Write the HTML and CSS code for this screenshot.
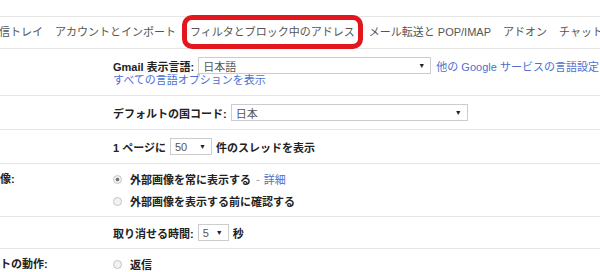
FILE: index.html
```html
<!DOCTYPE html>
<html lang="ja">
<head>
    <meta charset="UTF-8">
    <title>設定 - Gmail</title>
    <meta name="viewport" content="width=device-width, initial-scale=1.0">
    <link rel="stylesheet" href="styles.css">
</head>
<body>
    <nav class="tabs">
        <span class="tab">受信トレイ</span>
        <span class="tab">アカウントとインポート</span>
        <span class="tab active">フィルタとブロック中のアドレス</span>
        <span class="tab">メール転送と POP/IMAP</span>
        <span class="tab">アドオン</span>
        <span class="tab">チャット</span>
    </nav>

    <div class="row">
        <div class="label"></div>
        <div class="value">
            <div class="line">
                <span>Gmail 表示言語:</span>
                <div class="select lang"><span>日本語</span><span class="arrow">▼</span></div>
                <a class="link" href="#">他の Google サービスの言語設定を変更</a>
            </div>
            <a class="link sub" href="#">すべての言語オプションを表示</a>
        </div>
    </div>

    <div class="row">
        <div class="label"></div>
        <div class="value">
            <div class="line">
                <span>デフォルトの国コード:</span>
                <div class="select country"><span>日本</span><span class="arrow">▼</span></div>
            </div>
        </div>
    </div>

    <div class="row">
        <div class="label"></div>
        <div class="value">
            <div class="line">
                <span>1 ページに</span>
                <div class="select count"><span>50</span><span class="arrow">▼</span></div>
                <span>件のスレッドを表示</span>
            </div>
        </div>
    </div>

    <div class="row tight">
        <div class="label">像:</div>
        <div class="value choices">
            <div class="choice">
                <span class="radio checked"></span>
                <span>外部画像を常に表示する</span>
                <span class="dash">-</span>
                <a class="link" href="#">詳細</a>
            </div>
            <div class="choice">
                <span class="radio"></span>
                <span>外部画像を表示する前に確認する</span>
            </div>
        </div>
    </div>

    <div class="row tight">
        <div class="label"></div>
        <div class="value">
            <div class="line">
                <span>取り消せる時間:</span>
                <div class="select undo"><span>5</span><span class="arrow">▼</span></div>
                <span>秒</span>
            </div>
        </div>
    </div>

    <div class="row tight">
        <div class="label">トの動作:</div>
        <div class="value choices">
            <div class="choice">
                <span class="radio"></span>
                <span>返信</span>
            </div>
        </div>
    </div>
</body>
</html>
```

FILE: styles.css
```css
body {
    margin: 0;
    font-family: "Liberation Sans", "Noto Sans CJK JP", sans-serif;
    font-size: 11px;
    color: #222;
    background: #fff;
    overflow: hidden;
    white-space: nowrap;
}
.tabs {
    display: flex;
    align-items: center;
    gap: 12px;
    height: 31px;
    margin: 16px 0 0 -12px;
    border-top: 1px solid #e6e6e6;
    border-bottom: 1px solid #e6e6e6;
    color: #555;
}
.tab {
    position: relative;
    line-height: 31px;
}
.tab.active {
    margin: 0 2px;
}
.tab.active::after {
    content: "";
    position: absolute;
    left: -8px;
    right: -8px;
    top: -2px;
    bottom: -1px;
    border: 5px solid #e3161e;
    border-radius: 10px;
}
.row {
    display: grid;
    grid-template-columns: 113px auto;
    padding: 8px 0;
    border-bottom: 1px solid #e6e6e6;
}
.row.tight {
    padding: 7px 0;
}
.label {
    font-weight: bold;
    line-height: 16px;
}
.value {
    display: flex;
    flex-direction: column;
}
.line {
    display: flex;
    align-items: center;
    gap: 4px;
    height: 17px;
    font-weight: bold;
}
.link {
    color: #4d6fd0;
    font-weight: normal;
    text-decoration: none;
}
.line .link {
    margin-left: 1px;
}
.sub {
    line-height: 13px;
}
.select {
    display: flex;
    align-items: center;
    justify-content: space-between;
    box-sizing: border-box;
    height: 17px;
    padding: 0 5px 0 4px;
    border: 1px solid #ccc;
    color: #555;
    font-weight: normal;
}
.select .arrow {
    color: #222;
    font-size: 7px;
}
.select.lang { width: 233px; }
.select.country { width: 237px; }
.select.count { width: 42px; }
.select.undo { width: 31px; }
.choices {
    gap: 6px;
}
.choice {
    display: flex;
    align-items: center;
    height: 16px;
    font-weight: bold;
}
.radio {
    box-sizing: border-box;
    width: 9px;
    height: 9px;
    margin-right: 8px;
    border: 1px solid #c4c4c4;
    border-radius: 50%;
    background: #f2f2f2;
}
.radio.checked {
    background: radial-gradient(circle, #777 0 1.6px, #f2f2f2 2.2px);
}
.dash {
    margin: 0 4px 0 5px;
    color: #999;
    font-weight: normal;
}
```
